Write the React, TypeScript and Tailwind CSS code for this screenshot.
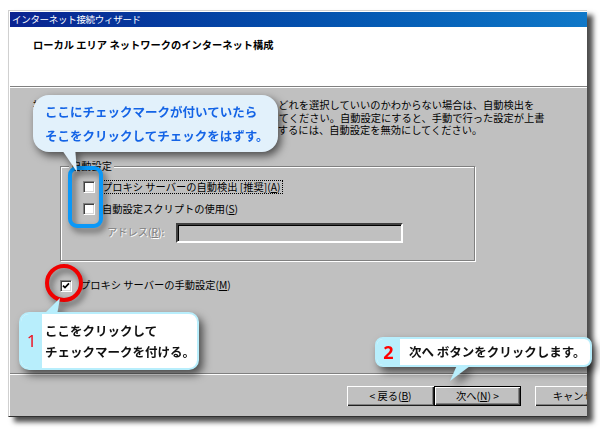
const Check = ({ checked }: { checked?: boolean }) => (
  <span className="flex h-[12px] w-[12px] shrink-0 items-center justify-center border border-t-[#808080] border-l-[#808080] border-r-white border-b-white bg-white shadow-[inset_1px_1px_0_#404040,inset_-1px_-1px_0_#d8d8d8]">
    {checked && (
      <svg width="8" height="8" viewBox="0 0 8 8">
        <path d="M1 3.6 L3 5.6 L7 1.4" stroke="#000" strokeWidth="1.7" fill="none" />
      </svg>
    )}
  </span>
);

const WinButton = ({ children, isDefault }: { children: React.ReactNode; isDefault?: boolean }) => (
  <div
    className={
      isDefault
        ? "flex h-[20px] w-[87px] shrink-0 items-center justify-center border border-black bg-[#c0c0c0] shadow-[inset_1px_1px_0_#fff,inset_-1px_-1px_0_#404040,inset_-2px_-2px_0_#808080]"
        : "flex h-[20px] w-[87px] shrink-0 items-center justify-center bg-[#c0c0c0] shadow-[inset_1px_1px_0_#fff,inset_-1px_-1px_0_#202020,inset_-2px_-2px_0_#808080]"
    }
  >
    {children}
  </div>
);

export default function App() {
  return (
    <div className="relative h-[432px] w-[600px] overflow-hidden bg-white font-['Noto_Sans_CJK_JP','Noto_Sans',sans-serif] text-[10.25px] leading-[12.5px] text-black">
      <div className="pl-[8px] pt-[10px]">
        <div className="flex h-[407px] w-[579px] flex-col overflow-hidden border-t border-l border-b border-t-[#d0d0d0] border-l-[#d0d0d0] border-b-[#303030] bg-white pt-[1px] pl-[1px] shadow-[6px_5px_5px_rgba(0,0,0,0.7)]">
          {/* title bar */}
          <div className="flex h-[15px] shrink-0 items-center bg-linear-to-r from-[#0a2290] to-[#1078c8] pl-[2px] text-[9.5px] tracking-[-0.3px] text-white">
            インターネット接続ウィザード
          </div>

          {/* header */}
          <div className="h-[59px] shrink-0 bg-white pl-[23px] pt-[12px] font-bold">
            ローカル エリア ネットワークのインターネット構成
          </div>
          <div className="h-[2px] shrink-0 border-t border-b border-t-[#808080] border-b-white" />

          {/* body */}
          <div className="flex h-[285px] shrink-0 flex-col bg-[#c0c0c0] pt-[11px]">
            <div className="pl-[23px] whitespace-nowrap">
              <div>接続に使うプロキシの設定方法を選択してください。どれを選択していいのかわからない場合は、自動検出を</div>
              <div>自動構成スクリプトを使用する場合は、それを選択してください。自動設定にすると、手動で行った設定が上書</div>
              <div>きされます。手動で設定したプロキシサーバーを使用するには、自動設定を無効にしてください。</div>
            </div>

            <div className="relative mt-[29px] ml-[50px] h-[95px] w-[415px] shrink-0 border border-[#808080] shadow-[inset_1px_1px_0_#fff,1px_1px_0_#fff]">
              <span className="absolute -top-[7px] left-[8px] bg-[#c0c0c0] px-[2px]">自動設定</span>
              <div className="flex flex-col pt-[14px] pl-[22px]">
                <div className="flex h-[12px] items-center gap-[4px]">
                  <Check />
                  <span className="border border-dotted border-black px-[2px] leading-[12px]">
                    プロキシ サーバーの自動検出 [推奨](<u>A</u>)
                  </span>
                </div>
                <div className="mt-[10px] flex h-[12px] items-center gap-[4px]">
                  <Check />
                  <span className="border border-transparent px-[2px] leading-[12px]">
                    自動設定スクリプトの使用(<u>S</u>)
                  </span>
                </div>
                <div className="mt-[8px] flex items-center pl-[24px]">
                  <span className="w-[69px] text-[#808080] [text-shadow:1px_1px_0_#fff]">
                    アドレス(<u>R</u>):
                  </span>
                  <div className="h-[20px] w-[227px] border-2 border-t-[#404040] border-l-[#404040] border-r-white border-b-white bg-[#c0c0c0] shadow-[inset_1px_1px_0_#000]" />
                </div>
              </div>
            </div>

            <div className="mt-[19px] flex h-[12px] items-center gap-[8px] pl-[50px]">
              <Check checked />
              <span>
                プロキシ サーバーの手動設定(<u>M</u>)
              </span>
            </div>
          </div>
          <div className="h-[2px] shrink-0 border-t border-b border-t-[#808080] border-b-white" />

          {/* footer */}
          <div className="flex flex-1 items-start bg-[#c0c0c0] pt-[11px] pl-[337px]">
            <WinButton>
              &lt; 戻る(<u>B</u>)
            </WinButton>
            <WinButton isDefault>
              次へ(<u>N</u>) &gt;
            </WinButton>
            <div className="ml-[14px]">
              <WinButton>キャンセル</WinButton>
            </div>
          </div>
        </div>
      </div>

      {/* blue highlight around auto checkboxes */}
      <div className="absolute top-[166px] left-[68px] h-[62px] w-[35px] rounded-[9px] border-[4px] border-[#0a98f8] drop-shadow-[3px_4px_3px_rgba(0,0,0,0.55)]" />

      {/* top callout */}
      <div className="absolute top-[95px] left-[33px] drop-shadow-[3px_4px_4px_rgba(0,0,0,0.6)]">
        <svg className="absolute top-[52px] left-[25px]" width="22" height="27" viewBox="0 0 22 27">
          <polygon points="2,0 17,0 19,25" fill="#e2f1fb" />
        </svg>
        <div className="relative flex h-[57px] w-[245px] flex-col justify-center rounded-[16px] bg-[#e2f1fb] pl-[12px] text-[12.5px] leading-[24px] font-bold text-[#1464e6]">
          <div>ここにチェックマークが付いていたら</div>
          <div>そこをクリックしてチェックをはずす。</div>
        </div>
      </div>

      {/* red circle */}
      <div className="absolute top-[264px] left-[45px] h-[38px] w-[38px] rounded-full border-[4px] border-[#f00000] drop-shadow-[3px_4px_3px_rgba(0,0,0,0.55)]" />

      {/* callout 1 */}
      <div className="absolute top-[312px] left-[19px] drop-shadow-[4px_5px_4px_rgba(0,0,0,0.6)]">
        <svg className="absolute -top-[15px] left-[22px]" width="22" height="19" viewBox="0 0 22 19">
          <polygon points="2,18 16,18 19,1" fill="#b8eefc" />
        </svg>
        <div className="relative flex h-[58px] w-[180px] overflow-hidden rounded-[10px] border-2 border-[#b8eefc] bg-white">
          <div className="flex w-[21px] shrink-0 items-center justify-center bg-[#b8eefc] font-['Noto_Sans',sans-serif] text-[17px] text-[#ee1020]">
            1
          </div>
          <div className="flex flex-col justify-center pl-[3px] text-[12.5px] leading-[21px] font-bold text-[#111]">
            <div>ここをクリックして</div>
            <div>チェックマークを付ける。</div>
          </div>
        </div>
      </div>

      {/* callout 2 */}
      <div className="absolute top-[337px] left-[375px] drop-shadow-[4px_5px_4px_rgba(0,0,0,0.6)]">
        <svg className="absolute top-[26px] left-[72px]" width="30" height="20" viewBox="0 0 30 20">
          <polygon points="11,0 27,0 3,18" fill="#b8eefc" />
        </svg>
        <div className="relative flex h-[30px] w-[217px] overflow-hidden rounded-[8px] border-2 border-[#b8eefc] bg-white">
          <div className="flex w-[23px] shrink-0 items-center justify-center bg-[#b8eefc] font-['Noto_Sans',sans-serif] text-[18px] font-bold text-[#ff0000]">
            2
          </div>
          <div className="flex items-center pl-[9px] text-[12.5px] font-bold text-[#111]">
            次へ ボタンをクリックします。
          </div>
        </div>
      </div>
    </div>
  );
}
